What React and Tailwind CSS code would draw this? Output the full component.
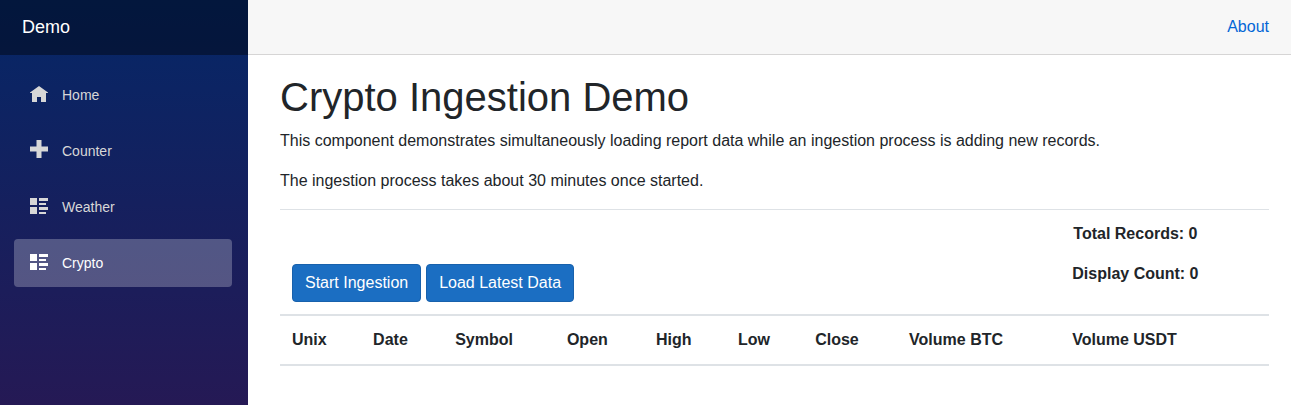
const icons = {
  home: 'M9 2L0 8.5v.5h2v9h5v-5h4v5h5v-9h2v-.5z',
  plus: 'M6.5 0h5v6.5h6.5v5h-6.5v6.5h-5v-6.5h-6.5v-5h6.5z',
  list: 'M0 2h7v7h-7zM9 2h9v3h-9zM9 7h7v2h-7zM0 11h7v7h-7zM9 11h9v3h-9zM9 16h7v2h-7z',
};

const links = [
  { label: 'Home', icon: icons.home },
  { label: 'Counter', icon: icons.plus },
  { label: 'Weather', icon: icons.list },
  { label: 'Crypto', icon: icons.list, active: true },
];

const columns = [
  { label: 'Unix', width: 'w-[8.2%]' },
  { label: 'Date', width: 'w-[8.3%]' },
  { label: 'Symbol', width: 'w-[11.3%]' },
  { label: 'Open', width: 'w-[9%]' },
  { label: 'High', width: 'w-[8.3%]' },
  { label: 'Low', width: 'w-[7.8%]' },
  { label: 'Close', width: 'w-[9.5%]' },
  { label: 'Volume BTC', width: 'w-[16.5%]' },
  { label: 'Volume USDT', width: 'w-[21.1%]' },
];

function NavItem({ label, icon, active }) {
  return (
    <li>
      <a
        href="#"
        aria-current={active ? 'page' : undefined}
        className={
          active
            ? 'flex h-12 items-center gap-3.5 rounded bg-white/25 px-4 text-white'
            : 'flex h-12 items-center gap-3.5 rounded px-4 text-[#d7d7d7]'
        }
      >
        <span className="pb-1">
          <svg className="block size-[18px] fill-current" viewBox="0 0 18 18" aria-hidden="true">
            <path d={icon} />
          </svg>
        </span>
        {label}
      </a>
    </li>
  );
}

function ActionButton({ children }) {
  return (
    <button
      type="button"
      className="rounded border border-[#1861ac] bg-[#1b6ec2] px-3 py-1.5 text-white"
    >
      {children}
    </button>
  );
}

export default function App() {
  return (
    <div className="flex min-h-screen bg-white font-['Liberation_Sans',Arial,sans-serif] text-base leading-6 text-[#212529]">
      <aside className="w-[248px] shrink-0 bg-[linear-gradient(180deg,#052767_0px,#3a1049_670px)]">
        <div className="flex h-[55px] items-center bg-black/40 px-[22px] pb-0.5">
          <a href="#" className="text-lg text-white">Demo</a>
        </div>
        <nav className="py-4 pr-4 pl-3.5 text-[14px]">
          <ul className="flex flex-col gap-2">
            {links.map((link) => (
              <NavItem key={link.label} {...link} />
            ))}
          </ul>
        </nav>
      </aside>

      <div className="min-w-0 flex-1">
        <header className="flex h-[55px] items-center justify-end border-b border-[#d6d5d5] bg-[#f7f7f7] px-[22px]">
          <a href="#" className="text-[#0366d6]">About</a>
        </header>

        <main className="pt-[18px] pr-[22px] pl-8">
          <h1 className="mb-2 text-[40px] leading-[48px]">Crypto Ingestion Demo</h1>
          <p className="mb-4">
            This component demonstrates simultaneously loading report data while an ingestion process is adding new records.
          </p>
          <p className="mb-4">The ingestion process takes about 30 minutes once started.</p>

          <table className="w-full table-fixed border-separate border-spacing-0 text-left">
            <colgroup>
              {columns.map((column) => (
                <col key={column.label} className={column.width} />
              ))}
            </colgroup>
            <thead>
              <tr>
                <td colSpan={8} className="border-t border-[#dee2e6] p-3 align-bottom">
                  <div className="flex gap-[5px]">
                    <ActionButton>Start Ingestion</ActionButton>
                    <ActionButton>Load Latest Data</ActionButton>
                  </div>
                </td>
                <td className="border-t border-[#dee2e6] p-3 font-bold">
                  <div className="w-fit text-center">
                    <p className="mb-4">Total Records: 0</p>
                    <p className="mb-4">Display Count: 0</p>
                  </div>
                </td>
              </tr>
              <tr>
                {columns.map((column) => (
                  <th key={column.label} scope="col" className="border-y-2 border-[#dee2e6] p-3 font-bold">
                    {column.label}
                  </th>
                ))}
              </tr>
            </thead>
          </table>
        </main>
      </div>
    </div>
  );
}
